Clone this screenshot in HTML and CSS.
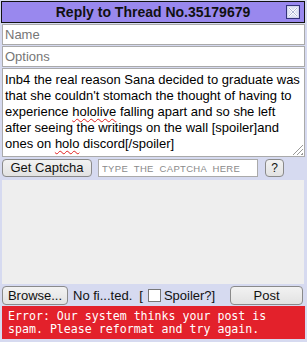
FILE: index.html
```html
<!DOCTYPE html>
<html lang="en">
<head>
  <meta charset="UTF-8" />
  <title>Quick Reply</title>
  <link rel="stylesheet" href="styles.css">
</head>
<body>
  <div id="qr">
    <div class="qr-head">
      Reply to Thread No.35179679
      <span class="qr-close">
        <svg width="14" height="14" viewBox="0 0 14 14">
          <rect x="0.5" y="0.5" width="13" height="13" fill="#c8c8e8" stroke="#33337a"/>
          <rect x="1.5" y="1.5" width="11" height="11" fill="#dfe4f4"/>
          <path d="M3 3 L11 11 M11 3 L3 11" stroke="#fff" stroke-width="2.2"/>
          <path d="M3 3 L11 11 M11 3 L3 11" stroke="#9aa4c8" stroke-width="0.8"/>
        </svg>
      </span>
    </div>
    <div class="qr-body">
      <input class="field" type="text" placeholder="Name">
      <input class="field" type="text" placeholder="Options">
      <div class="comment">Inb4 the real reason Sana decided to graduate was that she couldn't stomach the thought of having to experience <span class="typo">hololive</span> falling apart and so she left after seeing the writings on the wall [spoiler]and ones on <span class="typo">holo</span> discord[/spoiler]<span class="grip"></span></div>
      <div class="captcha-row">
        <button class="btn cap-btn">Get Captcha</button>
        <input class="cap-input" type="text" placeholder="TYPE THE CAPTCHA HERE">
        <button class="btn help-btn">?</button>
      </div>
      <div class="captcha-box"></div>
      <div class="file-row">
        <button class="btn browse">Browse...</button>
        <span class="file-name">No fi...ted.</span>
        <span class="spoiler">[<span class="check"></span>Spoiler?]</span>
        <button class="btn post">Post</button>
      </div>
      <div class="error">Error: Our system thinks your post is spam. Please reformat and try again.</div>
    </div>
  </div>
</body>
</html>
```

FILE: styles.css
```css
* { margin: 0; padding: 0; box-sizing: border-box; }
body {
  font-family: "Liberation Sans", Arial, sans-serif;
  background-color: #d6daf0;
  width: 307px;
  height: 342px;
  overflow: hidden;
}
#qr {
  background-color: #d6daf0;
  padding: 1px 2px 4px 1px;
}
.qr-head {
  position: relative;
  height: 22px;
  background-color: #9988ee;
  border: 1px solid #111;
  font-size: 14px;
  font-weight: bold;
  line-height: 20px;
  text-align: center;
  color: #111;
}
.qr-close {
  position: absolute;
  right: 4px;
  top: 3px;
  width: 14px;
  height: 14px;
}
.qr-close svg { display: block; }
.qr-body {
  padding-left: 1px;
  display: flex;
  flex-direction: column;
}
.field {
  display: block;
  width: 100%;
  height: 21px;
  margin-top: 1px;
  border: 1px solid #aaa;
  background: #fff;
  font-family: "Liberation Sans", Arial, sans-serif;
  font-size: 13px;
  padding: 0 2px;
  outline: none;
}
.field::placeholder { color: #767676; }
.comment {
  position: relative;
  height: 89px;
  margin-top: 1px;
  border: 1px solid #aaa;
  background: #fff;
  font-size: 13px;
  line-height: 16px;
  padding: 3px 2px 2px;
  color: #000;
}
.typo {
  text-decoration: underline wavy #e02020;
  text-decoration-thickness: 1px;
  text-underline-offset: 2px;
}
.grip {
  position: absolute;
  right: 1px;
  bottom: 1px;
  width: 11px;
  height: 11px;
  background: repeating-linear-gradient(135deg, transparent 0 2px, #999 2px 3px);
  clip-path: polygon(100% 0, 100% 100%, 0 100%);
}
.btn {
  font-family: "Liberation Sans", Arial, sans-serif;
  font-size: 13px;
  color: #111;
  background: linear-gradient(#f2f2f2, #e2e2e2);
  border: 1px solid #8a8a8a;
  border-radius: 4px;
  height: 18px;
  line-height: 16px;
}
.captcha-row {
  display: flex;
  align-items: center;
  margin-top: 2px;
  height: 18px;
}
.cap-btn { width: 90px; }
.cap-input {
  width: 160px;
  height: 18px;
  margin-left: 6px;
  border: 1px solid #aaa;
  background: #fff;
  font-size: 9.5px;
  letter-spacing: 0.3px;
  word-spacing: 3px;
  padding: 0 3px;
  font-family: "Liberation Sans", Arial, sans-serif;
  outline: none;
}
.cap-input::placeholder { color: #8a8a8a; }
.help-btn {
  width: 19px;
  margin-left: 7px;
  font-size: 12px;
}
.captcha-box {
  height: 104px;
  margin-top: 3px;
  background-color: #eeeeee;
  margin-right: 1px;
}
.file-row {
  display: flex;
  align-items: flex-start;
  height: 22px;
  padding-top: 2px;
  font-size: 13px;
  color: #111;
}
.browse { width: 66px; height: 19px; }
.file-name { margin-left: 5px; line-height: 19px; }
.spoiler {
  margin-left: 7px;
  display: flex;
  align-items: center;
  height: 19px;
}
.check {
  display: inline-block;
  width: 13px;
  height: 13px;
  border: 1px solid #777;
  background: #fff;
  margin: 0 3px 0 5px;
}
.post {
  margin-left: auto;
  margin-right: 2px;
  width: 73px;
  height: 19px;
}
.error {
  background-color: #e3212b;
  color: #fff;
  font-family: "DejaVu Sans Mono", monospace;
  font-size: 11.6px;
  line-height: 13px;
  padding: 4px 6px 3px;
  height: 33px;
}
```
